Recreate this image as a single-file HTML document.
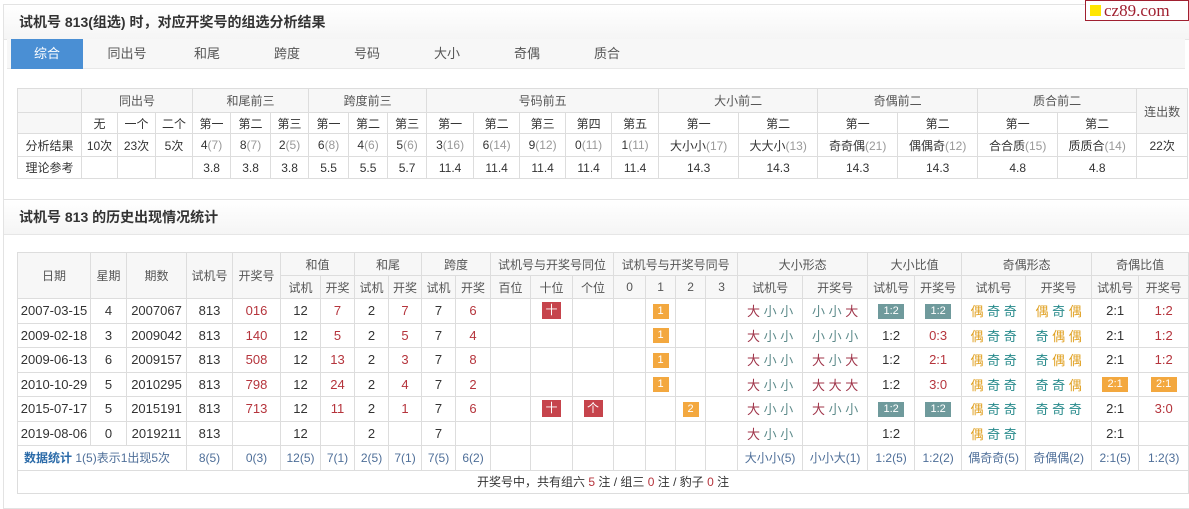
<!DOCTYPE html>
<html><head><meta charset="utf-8"><style>
*{margin:0;padding:0;box-sizing:border-box}
body{width:1189px;height:498px;overflow:hidden;background:#fff;font-family:"Liberation Sans","Noto Sans CJK SC",sans-serif;font-size:12px;color:#333;position:relative}
.panel{position:absolute;left:3px;right:-2px;border:1px solid #e3e3e3;background:#fff}
.ttl{height:35px;line-height:34px;padding-left:15px;font-weight:bold;font-size:14px;color:#333;background:linear-gradient(#fff,#f5f5f5);border-bottom:1px solid #e6e6e6}
.tabs{position:absolute;left:7px;top:39px;width:1178px;height:30px;background:#f7f7f7;border-bottom:1px solid #e8e8e8}
.tabs span{position:absolute;top:0;height:30px;line-height:30px;font-size:13px;color:#555;text-align:center;width:72px}
.tabs .on{background:#4a8fd4;color:#fff}
table{position:absolute;border-collapse:collapse;table-layout:fixed}
td{border:1px solid #ddd;text-align:center;padding:0;white-space:nowrap;overflow:hidden}
.h td{background:#f7f7f7;color:#555}
.g{color:#999}
.r{color:#b5343c}
.rb{display:inline-block;width:19px;height:17px;line-height:17px;background:#c6444c;color:#fff;font-size:12px;vertical-align:middle}
.ob{display:inline-block;width:16px;height:15px;line-height:15px;background:#f3a83f;color:#fff;font-size:11px;vertical-align:middle}
.tb{display:inline-block;width:26px;height:15px;line-height:15px;background:#6f9a9c;color:#fff;font-size:11px;vertical-align:middle}
.obw{display:inline-block;width:26px;height:15px;line-height:15px;background:#f3a83f;color:#fff;font-size:11px;vertical-align:middle}
.d{color:#a0354a}.x{color:#5f8c8c}.o{color:#e0a020}.j{color:#25898a}
.st{color:#4f6f99}
#t2{font-size:13px}
#t2 .h td{font-size:12px}
#t2 tr.dr{height:24.5px}
#t2 .st{font-size:12px}
</style></head><body>
<div class="panel" style="top:4px;height:196px">
<div class="ttl">试机号 813(组选) 时，对应开奖号的组选分析结果</div>
</div>
<div class="tabs">
<span class="on" style="left:4px">综合</span>
<span style="left:84px">同出号</span><span style="left:164px">和尾</span><span style="left:244px">跨度</span><span style="left:324px">号码</span><span style="left:404px">大小</span><span style="left:484px">奇偶</span><span style="left:564px">质合</span>
</div>
<table style="left:17px;top:88px;width:1170px">
<colgroup><col style="width:64px"><col style="width:36px"><col style="width:38px"><col style="width:37px"><col style="width:38px"><col style="width:40px"><col style="width:38px"><col style="width:40px"><col style="width:39px"><col style="width:39px"><col style="width:47px"><col style="width:46px"><col style="width:46px"><col style="width:46px"><col style="width:47px"><col style="width:80px"><col style="width:79px"><col style="width:80px"><col style="width:80px"><col style="width:80px"><col style="width:79px"><col style="width:51px"></colgroup>
<tr class="h" style="height:24px"><td></td><td colspan="3">同出号</td><td colspan="3">和尾前三</td><td colspan="3">跨度前三</td><td colspan="5">号码前五</td><td colspan="2">大小前二</td><td colspan="2">奇偶前二</td><td colspan="2">质合前二</td><td rowspan="2">连出数</td></tr>
<tr style="height:21px"><td style="background:#f7f7f7"></td><td>无</td><td>一个</td><td>二个</td><td>第一</td><td>第二</td><td>第三</td><td>第一</td><td>第二</td><td>第三</td><td>第一</td><td>第二</td><td>第三</td><td>第四</td><td>第五</td><td>第一</td><td>第二</td><td>第一</td><td>第二</td><td>第一</td><td>第二</td></tr>
<tr style="height:23px"><td>分析结果</td><td>10次</td><td>23次</td><td>5次</td><td>4<span class="g">(7)</span></td><td>8<span class="g">(7)</span></td><td>2<span class="g">(5)</span></td><td>6<span class="g">(8)</span></td><td>4<span class="g">(6)</span></td><td>5<span class="g">(6)</span></td><td>3<span class="g">(16)</span></td><td>6<span class="g">(14)</span></td><td>9<span class="g">(12)</span></td><td>0<span class="g">(11)</span></td><td>1<span class="g">(11)</span></td><td>大小小<span class="g">(17)</span></td><td>大大小<span class="g">(13)</span></td><td>奇奇偶<span class="g">(21)</span></td><td>偶偶奇<span class="g">(12)</span></td><td>合合质<span class="g">(15)</span></td><td>质质合<span class="g">(14)</span></td><td>22次</td></tr>
<tr style="height:22px"><td>理论参考</td><td></td><td></td><td></td><td>3.8</td><td>3.8</td><td>3.8</td><td>5.5</td><td>5.5</td><td>5.7</td><td>11.4</td><td>11.4</td><td>11.4</td><td>11.4</td><td>11.4</td><td>14.3</td><td>14.3</td><td>14.3</td><td>14.3</td><td>4.8</td><td>4.8</td><td></td></tr>
</table>
<div class="panel" style="top:199px;height:310px">
<div class="ttl">试机号 813 的历史出现情况统计</div>
</div>
<table id="t2" style="left:17px;top:252px;width:1171px">
<colgroup><col style="width:73px"><col style="width:36px"><col style="width:60px"><col style="width:46px"><col style="width:48px"><col style="width:40px"><col style="width:34px"><col style="width:34px"><col style="width:33px"><col style="width:34px"><col style="width:35px"><col style="width:40px"><col style="width:42px"><col style="width:41px"><col style="width:32px"><col style="width:30px"><col style="width:30px"><col style="width:32px"><col style="width:65px"><col style="width:65px"><col style="width:47px"><col style="width:47px"><col style="width:64px"><col style="width:66px"><col style="width:47px"><col style="width:50px"></colgroup>
<tr class="h" style="height:23px"><td rowspan="2">日期</td><td rowspan="2">星期</td><td rowspan="2">期数</td><td rowspan="2">试机号</td><td rowspan="2">开奖号</td><td colspan="2">和值</td><td colspan="2">和尾</td><td colspan="2">跨度</td><td colspan="3">试机号与开奖号同位</td><td colspan="4">试机号与开奖号同号</td><td colspan="2">大小形态</td><td colspan="2">大小比值</td><td colspan="2">奇偶形态</td><td colspan="2">奇偶比值</td></tr>
<tr class="h" style="height:23px"><td>试机</td><td>开奖</td><td>试机</td><td>开奖</td><td>试机</td><td>开奖</td><td>百位</td><td>十位</td><td>个位</td><td>0</td><td>1</td><td>2</td><td>3</td><td>试机号</td><td>开奖号</td><td>试机号</td><td>开奖号</td><td>试机号</td><td>开奖号</td><td>试机号</td><td>开奖号</td></tr>
<tr class="dr"><td>2007-03-15</td><td>4</td><td>2007067</td><td>813</td><td class="r">016</td><td>12</td><td class="r">7</td><td>2</td><td class="r">7</td><td>7</td><td class="r">6</td><td></td><td><span class="rb">十</span></td><td></td><td></td><td><span class="ob">1</span></td><td></td><td></td><td><span class="d">大</span> <span class="x">小 小</span></td><td><span class="x">小 小</span> <span class="d">大</span></td><td><span class="tb">1:2</span></td><td><span class="tb">1:2</span></td><td><span class="o">偶</span> <span class="j">奇 奇</span></td><td><span class="o">偶</span> <span class="j">奇</span> <span class="o">偶</span></td><td>2:1</td><td class="r">1:2</td></tr>
<tr class="dr"><td>2009-02-18</td><td>3</td><td>2009042</td><td>813</td><td class="r">140</td><td>12</td><td class="r">5</td><td>2</td><td class="r">5</td><td>7</td><td class="r">4</td><td></td><td></td><td></td><td></td><td><span class="ob">1</span></td><td></td><td></td><td><span class="d">大</span> <span class="x">小 小</span></td><td><span class="x">小 小 小</span></td><td>1:2</td><td class="r">0:3</td><td><span class="o">偶</span> <span class="j">奇 奇</span></td><td><span class="j">奇</span> <span class="o">偶 偶</span></td><td>2:1</td><td class="r">1:2</td></tr>
<tr class="dr"><td>2009-06-13</td><td>6</td><td>2009157</td><td>813</td><td class="r">508</td><td>12</td><td class="r">13</td><td>2</td><td class="r">3</td><td>7</td><td class="r">8</td><td></td><td></td><td></td><td></td><td><span class="ob">1</span></td><td></td><td></td><td><span class="d">大</span> <span class="x">小 小</span></td><td><span class="d">大</span> <span class="x">小</span> <span class="d">大</span></td><td>1:2</td><td class="r">2:1</td><td><span class="o">偶</span> <span class="j">奇 奇</span></td><td><span class="j">奇</span> <span class="o">偶 偶</span></td><td>2:1</td><td class="r">1:2</td></tr>
<tr class="dr"><td>2010-10-29</td><td>5</td><td>2010295</td><td>813</td><td class="r">798</td><td>12</td><td class="r">24</td><td>2</td><td class="r">4</td><td>7</td><td class="r">2</td><td></td><td></td><td></td><td></td><td><span class="ob">1</span></td><td></td><td></td><td><span class="d">大</span> <span class="x">小 小</span></td><td><span class="d">大 大 大</span></td><td>1:2</td><td class="r">3:0</td><td><span class="o">偶</span> <span class="j">奇 奇</span></td><td><span class="j">奇 奇</span> <span class="o">偶</span></td><td><span class="obw">2:1</span></td><td><span class="obw">2:1</span></td></tr>
<tr class="dr"><td>2015-07-17</td><td>5</td><td>2015191</td><td>813</td><td class="r">713</td><td>12</td><td class="r">11</td><td>2</td><td class="r">1</td><td>7</td><td class="r">6</td><td></td><td><span class="rb">十</span></td><td><span class="rb">个</span></td><td></td><td></td><td><span class="ob">2</span></td><td></td><td><span class="d">大</span> <span class="x">小 小</span></td><td><span class="d">大</span> <span class="x">小 小</span></td><td><span class="tb">1:2</span></td><td><span class="tb">1:2</span></td><td><span class="o">偶</span> <span class="j">奇 奇</span></td><td><span class="j">奇 奇 奇</span></td><td>2:1</td><td class="r">3:0</td></tr>
<tr class="dr"><td>2019-08-06</td><td>0</td><td>2019211</td><td>813</td><td></td><td>12</td><td></td><td>2</td><td></td><td>7</td><td></td><td></td><td></td><td></td><td></td><td></td><td></td><td></td><td><span class="d">大</span> <span class="x">小 小</span></td><td></td><td>1:2</td><td></td><td><span class="o">偶</span> <span class="j">奇 奇</span></td><td></td><td>2:1</td><td></td></tr>
<tr class="st dr"><td colspan="3" style="text-align:left;padding-left:6px"><b style="color:#2a6aa8">数据统计</b> 1(5)表示1出现5次</td><td>8(5)</td><td>0(3)</td><td>12(5)</td><td>7(1)</td><td>2(5)</td><td>7(1)</td><td>7(5)</td><td>6(2)</td><td></td><td></td><td></td><td></td><td></td><td></td><td></td><td>大小小(5)</td><td>小小大(1)</td><td>1:2(5)</td><td>1:2(2)</td><td>偶奇奇(5)</td><td>奇偶偶(2)</td><td>2:1(5)</td><td>1:2(3)</td></tr>
<tr style="height:23px"><td colspan="26" style="font-size:12px">开奖号中，共有组六 <span class="r">5</span> 注 / 组三 <span class="r">0</span> 注 / 豹子 <span class="r">0</span> 注</td></tr>
</table>
<div style="position:absolute;left:1085px;top:0;width:104px;height:21px;border:1px solid #a02030;background:#fff;font-family:'Liberation Serif',serif;font-size:17px;line-height:19px;color:#a02030;padding-left:4px"><span style="display:inline-block;width:11px;height:11px;background:#ffe600;margin-right:3px"></span>cz89.com</div>
</body></html>
